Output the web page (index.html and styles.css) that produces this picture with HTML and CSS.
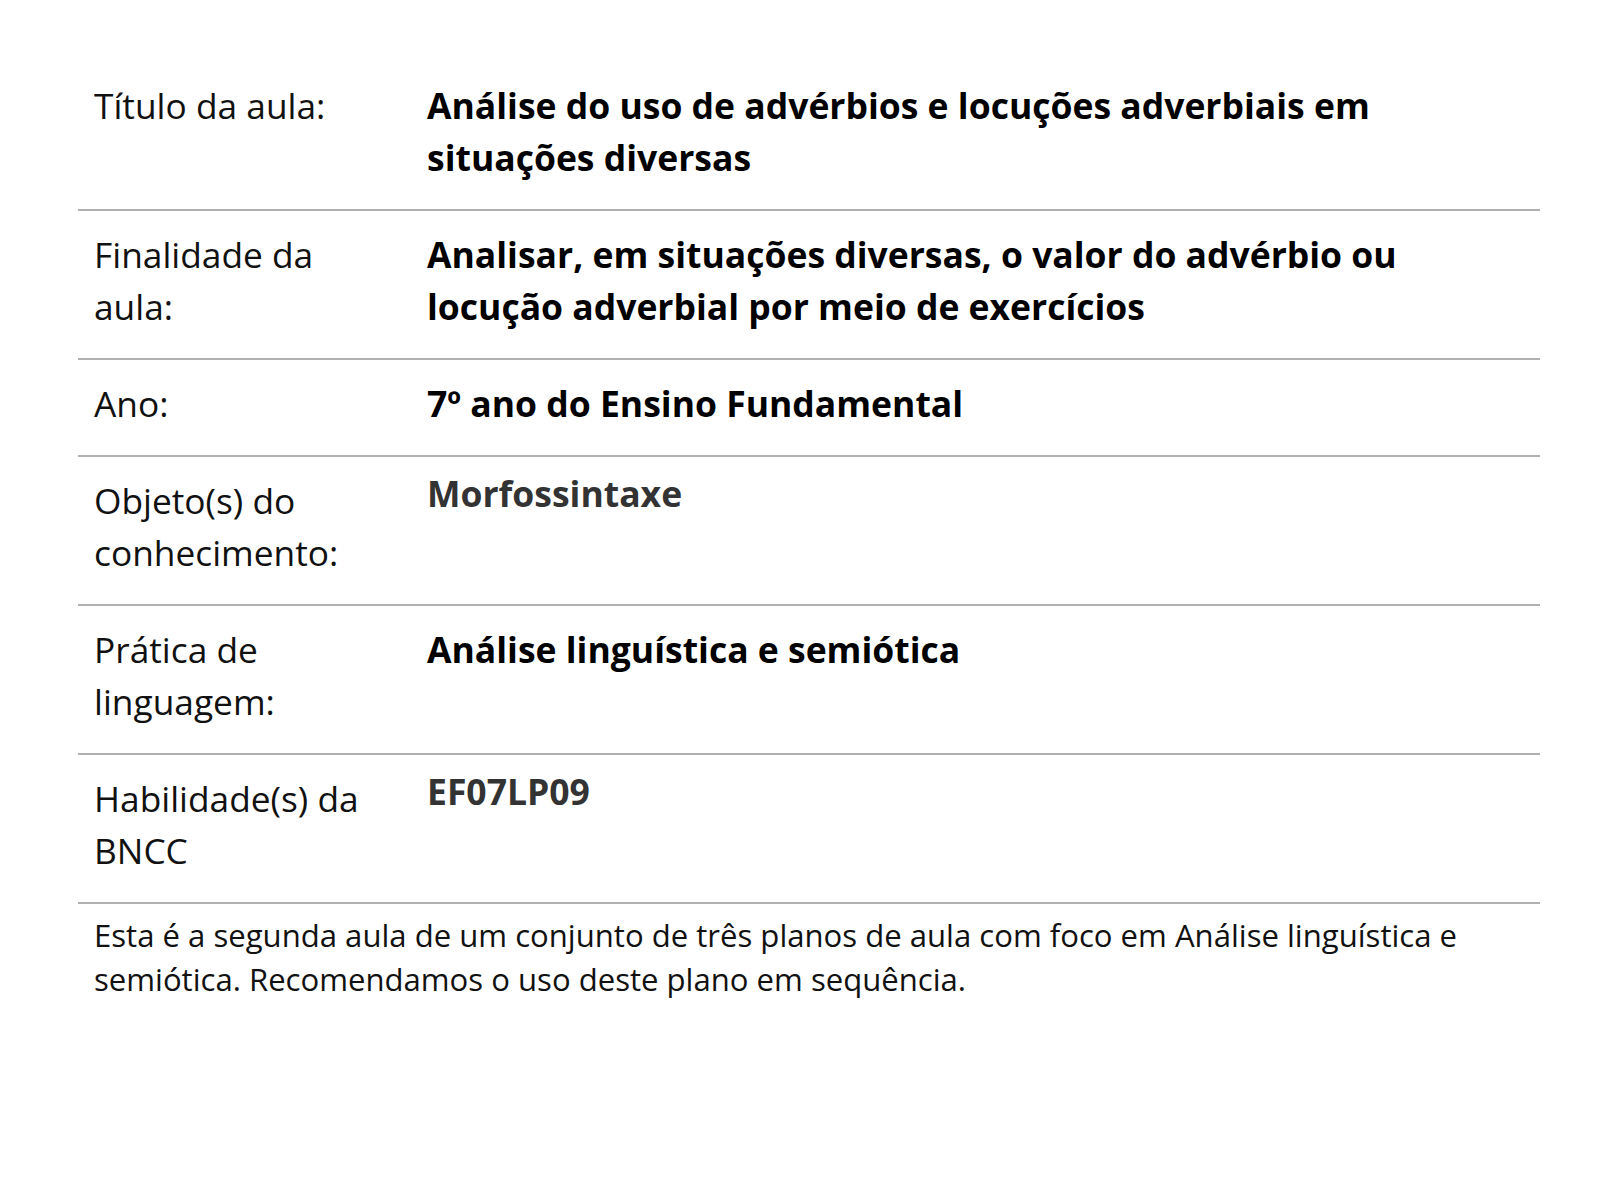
FILE: index.html
```html
<!DOCTYPE html>
<html lang="pt">
<head>
<meta charset="utf-8">
<link rel="stylesheet" href="styles.css">
</head>
<body>
<main class="page">
  <table class="plan">
    <tbody>
      <tr>
        <th class="label">Título da aula:</th>
        <td class="value">Análise do uso de advérbios e locuções adverbiais em situações diversas</td>
      </tr>
      <tr>
        <th class="label">Finalidade da aula:</th>
        <td class="value">Analisar, em situações diversas, o valor do advérbio ou locução adverbial por meio de exercícios</td>
      </tr>
      <tr>
        <th class="label">Ano:</th>
        <td class="value">7º ano do Ensino Fundamental</td>
      </tr>
      <tr>
        <th class="label">Objeto(s) do conhecimento:</th>
        <td class="value"><span class="tag">Morfossintaxe</span></td>
      </tr>
      <tr>
        <th class="label">Prática de linguagem:</th>
        <td class="value">Análise linguística e semiótica</td>
      </tr>
      <tr>
        <th class="label">Habilidade(s) da BNCC</th>
        <td class="value"><span class="tag">EF07LP09</span></td>
      </tr>
    </tbody>
  </table>
  <p class="note">Esta é a segunda aula de um conjunto de três planos de aula com foco em Análise linguística e semiótica. Recomendamos o uso deste plano em sequência.</p>
</main>
</body>
</html>
```

FILE: styles.css
```css
html, body {
  margin: 0;
  padding: 0;
  background: #ffffff;
}
body {
  font-family: "Open Sans", "Liberation Sans", sans-serif;
  color: #111111;
}
.page {
  padding: 62px 60px 0 78px;
}
.plan {
  width: 1462px;
  border-collapse: collapse;
}
.plan tr {
  border-bottom: 2px solid #b0b0b0;
}
.label {
  width: 290px;
  padding: 17px 43px 26px 16px;
  text-align: left;
  vertical-align: top;
  font-weight: 400;
  font-size: 35.3px;
  line-height: 52px;
  color: #111111;
}
.value {
  padding: 17px 50px 26px 0;
  vertical-align: top;
  font-weight: 700;
  font-size: 35.5px;
  line-height: 52px;
  color: #000000;
}
.tag {
  display: block;
  line-height: 38px;
  color: #333333;
}
.note {
  margin: 9px 40px 0 16px;
  font-size: 31.1px;
  line-height: 44px;
  color: #111111;
}
```
